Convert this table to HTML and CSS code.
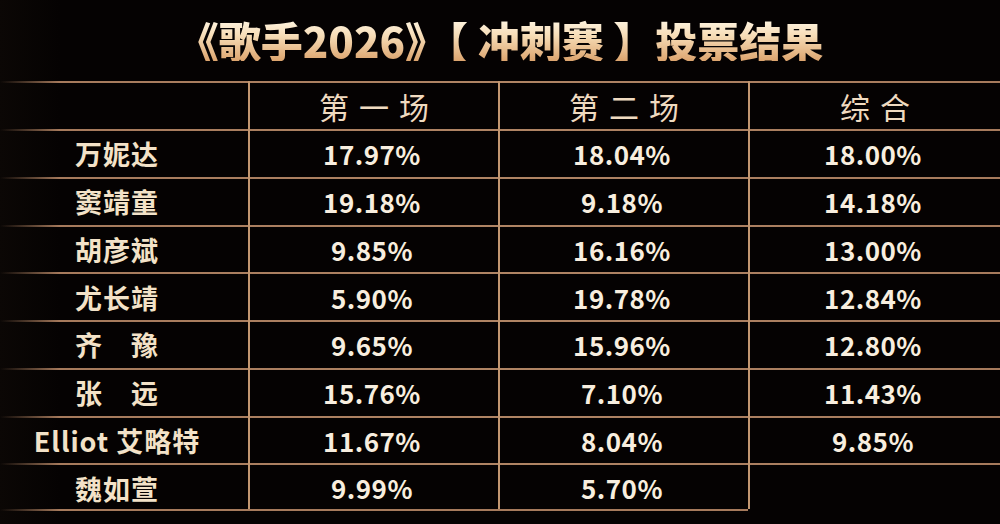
FILE: index.html
```html
<!DOCTYPE html>
<html lang="zh">
<head>
<meta charset="utf-8">
<title>歌手2026 冲刺赛 投票结果</title>
<link rel="stylesheet" href="styles.css">
</head>
<body>
<main class="board">
  <h1 class="title"><span class="title-text">《歌手2026》【 冲刺赛 】投票结果</span></h1>
  <div class="table">
    <div class="row head">
      <div class="cell"></div>
      <div class="cell">第一场</div>
      <div class="cell">第二场</div>
      <div class="cell">综合</div>
    </div>
    <div class="row">
      <div class="cell name">万妮达</div>
      <div class="cell num">17.97%</div>
      <div class="cell num">18.04%</div>
      <div class="cell num">18.00%</div>
    </div>
    <div class="row">
      <div class="cell name">窦靖童</div>
      <div class="cell num">19.18%</div>
      <div class="cell num">9.18%</div>
      <div class="cell num">14.18%</div>
    </div>
    <div class="row">
      <div class="cell name">胡彦斌</div>
      <div class="cell num">9.85%</div>
      <div class="cell num">16.16%</div>
      <div class="cell num">13.00%</div>
    </div>
    <div class="row">
      <div class="cell name">尤长靖</div>
      <div class="cell num">5.90%</div>
      <div class="cell num">19.78%</div>
      <div class="cell num">12.84%</div>
    </div>
    <div class="row">
      <div class="cell name">齐　豫</div>
      <div class="cell num">9.65%</div>
      <div class="cell num">15.96%</div>
      <div class="cell num">12.80%</div>
    </div>
    <div class="row">
      <div class="cell name">张　远</div>
      <div class="cell num">15.76%</div>
      <div class="cell num">7.10%</div>
      <div class="cell num">11.43%</div>
    </div>
    <div class="row">
      <div class="cell name">Elliot 艾略特</div>
      <div class="cell num">11.67%</div>
      <div class="cell num">8.04%</div>
      <div class="cell num">9.85%</div>
    </div>
    <div class="row last">
      <div class="cell name">魏如萱</div>
      <div class="cell num">9.99%</div>
      <div class="cell num">5.70%</div>
      <div class="cell num"></div>
    </div>
  </div>
</main>
</body>
</html>
```
FILE: styles.css
```css
html, body {
  margin: 0;
  padding: 0;
}
body {
  width: 1000px;
  height: 524px;
  overflow: hidden;
  background: #050202;
  font-family: "Noto Sans CJK SC", "Noto Sans", sans-serif;
}
.board {
  width: 1000px;
  height: 524px;
  background: linear-gradient(to right, #0b0705 0, #050202 60px, #050202 100%);
}
.title {
  margin: 0;
  height: 81px;
  display: flex;
  align-items: center;
  justify-content: center;
  padding-bottom: 2px;
  box-sizing: border-box;
  font-size: 42px;
  font-weight: 900;
  line-height: 1;
}
.title-text {
  background: linear-gradient(to bottom, #fff6e4 0%, #f6dcb6 40%, #dca46e 100%);
  -webkit-background-clip: text;
  background-clip: text;
  color: transparent;
}
.table {
  display: flex;
  flex-direction: column;
}
.row {
  display: grid;
  grid-template-columns: 248px 250px 250px 252px;
  height: 47.75px;
  background: linear-gradient(to right, rgba(166, 122, 92, 0) 0, #a67a5c 60px, #b08464 50%, #a67a5c 100%) left top / 100% 2px no-repeat;
}
.row.head {
  height: 48px;
}
.row.last {
  height: 49px;
  background:
    linear-gradient(to right, rgba(166, 122, 92, 0) 0, #a67a5c 60px, #b08464 50%, #a67a5c 100%) left top / 100% 2px no-repeat,
    linear-gradient(to right, rgba(166, 122, 92, 0) 0, #a67a5c 60px, #a67a5c 100%) left 0 top 46px / 748px 2px no-repeat;
}
.cell {
  display: flex;
  align-items: center;
  justify-content: center;
  padding-top: 2px;
  color: #f6e9d6;
  white-space: nowrap;
}
.cell + .cell {
  border-left: 2px solid #c29670;
}
.row.last .cell + .cell {
  margin-bottom: 3px;
}
.head .cell {
  font-size: 30px;
  font-weight: 400;
  letter-spacing: 10px;
  padding-left: 10px;
  color: #efdac0;
}
.name {
  font-size: 27px;
  font-weight: 700;
  letter-spacing: 1px;
  padding-right: 14px;
  color: #f3e2c8;
}
.num {
  font-size: 26px;
  font-weight: 600;
  letter-spacing: 0.5px;
  padding-right: 4px;
  color: #f8eedf;
}
```
